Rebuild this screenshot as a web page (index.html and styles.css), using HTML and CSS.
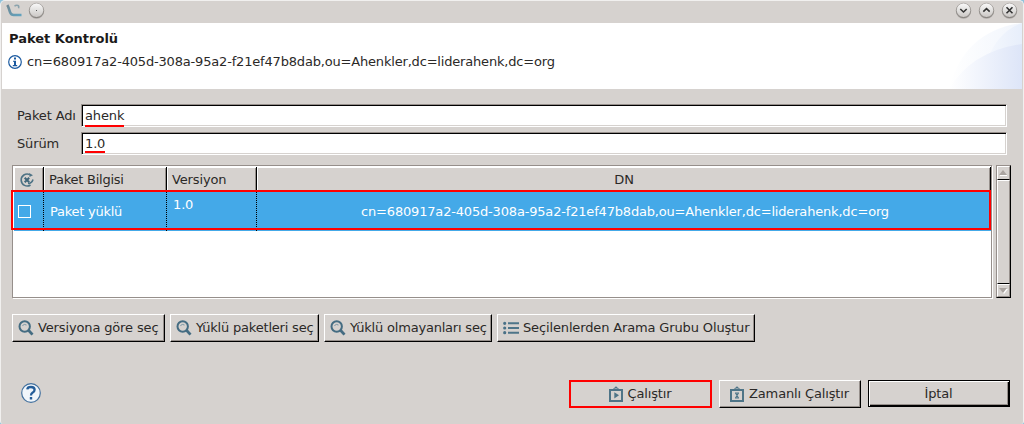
FILE: index.html
```html
<!DOCTYPE html>
<html lang="tr">
<head>
<meta charset="utf-8">
<title>Paket Kontrolü</title>
<link rel="stylesheet" href="styles.css">
</head>
<body>
<svg width="0" height="0" class="defs">
  <defs>
    <linearGradient id="ball" x1="0" y1="0" x2="0" y2="1"><stop offset="0" stop-color="#fafafa"/><stop offset="1" stop-color="#c9c6c3"/></linearGradient>
    <linearGradient id="ring" x1="0" y1="0" x2="0" y2="1"><stop offset="0" stop-color="#b5b1ae"/><stop offset="1" stop-color="#77736f"/></linearGradient>
    <symbol id="search" viewBox="0 0 16 16"><circle cx="6.7" cy="6.5" r="5.2" fill="none" stroke="#446c82" stroke-width="2"/><path d="M4.4 5.6Q6.3 3.6 8.5 5" fill="none" stroke="#7795a5"/><path d="M10.5 10.3L14.5 14.6" stroke="#446c82" stroke-width="2.8"/></symbol>
    <symbol id="clip" viewBox="0 0 14 16"><path d="M1 4H13V15H1Z" fill="none" stroke="#4e7487" stroke-width="2"/><path d="M4 5V2.5H5.5V1.5Q7-.7 8.5 1.5V2.5H10V5Z" fill="#4e7487"/><path d="M6.5 2h1v1h-1z" fill="#d6d2cf"/></symbol>
  </defs>
</svg>
<div class="window">
  <header class="titlebar">
    <svg class="app-icon" width="18" height="16" viewBox="0 0 18 16"><defs><linearGradient id="app" x1="0" y1="0" x2="1" y2="1"><stop offset="0" stop-color="#6f8792"/><stop offset="1" stop-color="#62a3bf"/></linearGradient></defs><path d="M1.3 3C3 5.5 3 8 4.3 10.8Q5.3 13.2 8 13H15.5" fill="none" stroke="url(#app)" stroke-width="2.6"/><path d="M8.5 4.3Q10 2.8 12 3.5Q13.3 4.2 12.5 6.3" fill="none" stroke="#8ba3ad" stroke-width="1.5"/></svg>
    <svg class="ball" width="17" height="18" viewBox="0 0 17 18"><circle cx="8.5" cy="9" r="7.7" fill="#aaa6a3"/><circle cx="8.5" cy="8.3" r="7.2" fill="url(#ball)" stroke="url(#ring)" stroke-width=".9"/><path d="M8 8h1v1H8z" fill="#555"/></svg>
    <div class="controls">
      <svg width="17" height="18" viewBox="0 0 17 18"><circle cx="8.5" cy="9" r="7.7" fill="#aaa6a3"/><circle cx="8.5" cy="8.3" r="7.2" fill="url(#ball)" stroke="url(#ring)" stroke-width=".9"/><path d="M5.3 7L8.5 10L11.7 7" fill="none" stroke="#333" stroke-width="1.6"/></svg>
      <svg width="17" height="18" viewBox="0 0 17 18"><circle cx="8.5" cy="9" r="7.7" fill="#aaa6a3"/><circle cx="8.5" cy="8.3" r="7.2" fill="url(#ball)" stroke="url(#ring)" stroke-width=".9"/><path d="M5.3 9.7L8.5 6.7L11.7 9.7" fill="none" stroke="#333" stroke-width="1.6"/></svg>
      <svg width="17" height="18" viewBox="0 0 17 18"><circle cx="8.5" cy="9" r="7.7" fill="#aaa6a3"/><circle cx="8.5" cy="8.3" r="7.2" fill="url(#ball)" stroke="url(#ring)" stroke-width=".9"/><path d="M5.5 5.3L11.5 11.3M11.5 5.3L5.5 11.3" stroke="#333" stroke-width="1.6"/></svg>
    </div>
  </header>
  <section class="banner">
    <div class="banner-text">
      <h1>Paket Kontrolü</h1>
      <p><svg width="14" height="14" viewBox="0 0 14 14"><circle cx="7" cy="7" r="6.3" fill="#fff" stroke="#1b5aa0" stroke-width="1.2"/><path d="M6 2.5h2v2H6zM5 5.7h3v4.4h1.2v1.2H4.8v-1.2H6V6.8H5z" fill="#1b5aa0"/></svg><span class="dn-text">cn=680917a2-405d-308a-95a2-f21ef47b8dab,ou=Ahenkler,dc=liderahenk,dc=org</span></p>
    </div>
    <svg class="swoosh" width="76" height="66" viewBox="0 0 76 66"><defs><linearGradient id="sw1"><stop offset="0" stop-color="#fff"/><stop offset="1" stop-color="#dde5f8"/></linearGradient><linearGradient id="sw2"><stop offset="0" stop-color="#fff"/><stop offset="1" stop-color="#f1f5fc"/></linearGradient><linearGradient id="sw3"><stop offset="0" stop-color="#f5f8fd"/><stop offset="1" stop-color="#e7eefb"/></linearGradient></defs><path d="M3 66Q18 8 76 0V66Z" fill="url(#sw2)"/><path d="M40 40Q51 9 76 0V40Z" fill="url(#sw3)"/><path d="M3 66Q26 28 76 21V66Z" fill="url(#sw1)"/></svg>
  </section>
  <main class="content">
    <div class="form">
      <label>Paket Adı</label><div class="field"><span class="marked">ahenk</span></div>
      <label>Sürüm</label><div class="field"><span class="marked version">1.0</span></div>
    </div>
    <div class="table-area">
      <div class="table">
        <div class="grid head">
          <div class="cell"><svg width="16" height="16" viewBox="0 0 16 16"><path d="M10.8 2.6A6 6 0 1 0 11.5 13M9 11.5A5.5 5.5 0 0 0 14 7.5" fill="none" stroke="#4e7385" stroke-width="1.6"/><path d="M10.2 1L14 3.2L10.5 5Z" fill="#4e7385"/><path d="M5.7 5.7L10.2 10.2M10.2 5.7L5.7 10.2" stroke="#3f667a" stroke-width="2"/></svg></div>
          <div class="cell tight">Paket Bilgisi</div><div class="cell">Versiyon</div><div class="cell dn">DN</div>
        </div>
        <div class="grid row">
          <div class="cell"><span class="checkbox"></span></div>
          <div class="cell tight">Paket yüklü</div><div class="cell top">1.0</div><div class="cell dn dn-text">cn=680917a2-405d-308a-95a2-f21ef47b8dab,ou=Ahenkler,dc=liderahenk,dc=org</div>
        </div>
        <div class="highlight"></div>
      </div>
      <div class="scrollbar">
        <div class="arrow"><svg width="9" height="6" viewBox="0 0 9 6"><path d="M0 5L4 0L8 5Z" fill="#aaa4a0"/><path d="M1 5.5H8" stroke="#fff"/></svg></div>
        <div class="thumb"></div>
        <div class="arrow down"><svg width="9" height="6" viewBox="0 0 9 6"><path d="M1 1H9L5 6Z" fill="#fff"/><path d="M0 0H8L4 5Z" fill="#aaa4a0"/></svg></div>
      </div>
    </div>
    <div class="actions">
      <button class="btn b1"><svg width="16" height="16"><use href="#search"/></svg>Versiyona göre seç</button>
      <button class="btn b2"><svg width="16" height="16"><use href="#search"/></svg>Yüklü paketleri seç</button>
      <button class="btn b3"><svg width="16" height="16"><use href="#search"/></svg>Yüklü olmayanları seç</button>
      <button class="btn b4"><svg width="16" height="16" viewBox="0 0 16 16"><path d="M1.7 3.3h0M1.7 8h0M1.7 12.7h0" stroke="#4a7187" stroke-width="3.2" stroke-linecap="round"/><path d="M5 3.3h11M5 8h11M5 12.7h11" stroke="#4e7589" stroke-width="2"/></svg>Seçilenlerden Arama Grubu Oluştur</button>
    </div>
  </main>
  <footer class="footer">
    <svg class="help" width="20" height="20" viewBox="0 0 20 20"><circle cx="10" cy="10" r="9.3" fill="#f1f6fb" stroke="#42709e" stroke-width="1.2"/><path d="M6.3 6.4Q6.5 4 10 4Q13.6 4 13.6 6.8Q13.6 8.4 11.7 9.6Q10 10.6 10 12.5" fill="none" stroke="#245d99" stroke-width="2.3"/><path d="M8.8 14h2.4v2.4H8.8z" fill="#245d99"/></svg>
    <button class="btn run"><svg width="14" height="16"><use href="#clip"/><path d="M5.3 6.2V12.4L10 9.3Z" fill="#4e7487"/></svg>Çalıştır</button>
    <button class="btn"><svg width="14" height="16"><use href="#clip"/><path d="M5 7H9M5 12H9M5.5 7L8.5 12M8.5 7L5.5 12" stroke="#4e7487" stroke-width="1.1"/></svg>Zamanlı Çalıştır</button>
    <button class="btn default">İptal</button>
  </footer>
</div>
</body>
</html>
```

FILE: styles.css
```css
* { box-sizing: border-box; }
body { margin: 0; background: #8fc3dc; font: 13px/16px "DejaVu Sans", sans-serif; letter-spacing: -.14px; color: #2b2927; }
.defs { display: block; height: 0; position: absolute; }
.window { width: 1024px; height: 424px; display: flex; flex-direction: column; background: #d6d2cf; border: solid #f1f0ef; border-width: 1px 1px 0; border-radius: 5px 5px 3px 3px; padding: 0 1px; overflow: hidden; }
.titlebar { height: 22px; flex: none; display: flex; align-items: flex-start; padding: 1px 4px 0 4px; }
.ball { margin-left: 4px; }
.controls { margin-left: auto; display: flex; gap: 6px; }
.banner { height: 66px; flex: none; background: #fff; display: flex; justify-content: space-between; }
.banner-text { padding: 7px 0 0 7px; }
h1 { margin: 0; font-size: 13px; line-height: 17px; letter-spacing: 0; color: #1c1a1a; }
.banner p { margin: 7px 0 0 -1px; display: flex; gap: 5px; }
.banner p svg { margin-top: 1px; }
.dn-text { letter-spacing: -.18px; }
.content { padding: 15px 11px 0 10px; }
.form { display: grid; grid-template-columns: 64px 926px; row-gap: 5px; padding-left: 5px; }
.form label { line-height: 23px; white-space: nowrap; }
.field { height: 23px; background: #fff; border: 1px solid; border-color: #968f8b #fff #fff #968f8b; box-shadow: inset 1px 1px #000, inset -1px -1px #d6d2cf; padding: 2px 0 0 3px; }
.marked { display: inline-block; height: 20px; line-height: 18px; border-bottom: 2px solid #f00; }
.version { height: 18px; }
.table-area { display: flex; gap: 4px; margin-top: 10px; height: 134px; }
.table { width: 980px; height: 133px; position: relative; background: #fff; border: 1px solid #968f8b; padding: 1px 0 1px 1px; box-shadow: 1px 1px #fff; }
.grid { display: grid; grid-template-columns: 30px 123px 90px 1fr; }
.cell { display: flex; align-items: center; white-space: nowrap; }
.tight { letter-spacing: -.25px; }
.head { height: 25px; border-bottom: 1px solid #000; }
.head .cell { padding: 2px 0 0 5px; background: #d6d2cf; border-right: 1px solid #000; box-shadow: inset 1px 1px #fff, inset -1px 0 #968f8b; }
.row { height: 39px; background: #44a9e8; color: #fff; }
.row .cell { padding-left: 6px; border-right: 1px dotted #000; }
.row .cell:first-child { padding-left: 4px; }
.row .cell.dn { border-right: 0; padding-left: 2px; }
.grid .dn { justify-content: center; padding-left: 1px; }
.row .top { align-items: flex-start; padding-top: 5px; }
.checkbox { width: 13px; height: 13px; border: 1px solid #fff; }
.highlight { position: absolute; left: -2px; top: 24px; width: 980px; height: 40px; border: 2px solid #f00; }
.scrollbar { width: 15px; height: 133px; display: flex; flex-direction: column; border: 1px solid; border-color: #968f8b #000 #000 #968f8b; background: #d6d2cf; }
.arrow, .thumb { border: 1px solid; border-color: #fff #968f8b #000 #fff; }
.arrow { height: 14px; flex: none; display: flex; align-items: center; justify-content: center; }
.arrow.down { height: 13px; border-bottom-color: #968f8b; }
.thumb { flex: 1; }
.actions { display: flex; gap: 5px; margin-top: 15px; }
.btn { width: 142px; height: 28px; padding: 0 1px 1px 0; display: flex; align-items: center; justify-content: center; gap: 5px; font: inherit; letter-spacing: inherit; color: inherit; white-space: nowrap; background: #d6d2cf; border: 1px solid; border-color: #fff #000 #000 #fff; box-shadow: inset -1px -1px #968f8b; }
.btn svg { flex: none; }
.actions .btn { gap: 4px; justify-content: flex-start; padding-left: 5px; }
.b1 { width: 153px; }
.b2 { width: 149px; }
.b3 { width: 168px; }
.b4 { width: 258px; }
.actions .b2, .actions .b3 { letter-spacing: -.2px; }
.footer { display: flex; align-items: flex-start; margin-top: 38px; padding: 0 12px 0 19px; gap: 7px; }
.help { margin: 3px auto 0 0; }
.btn.run { width: 143px; border: 2px solid #f00; box-shadow: none; }
.btn.default { height: 27px; padding: 1px 1px 0 0; border-color: #000; box-shadow: inset 1px 1px #fff, inset -1px -1px #000, inset -2px -2px #968f8b; }
```
